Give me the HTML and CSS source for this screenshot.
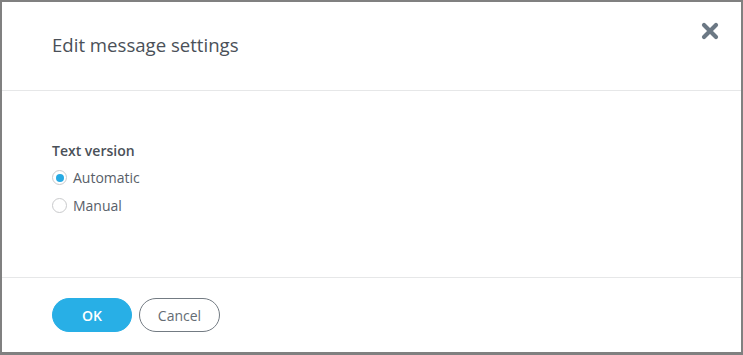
FILE: index.html
```html
<!DOCTYPE html>
<html lang="en">
<head>
<meta charset="utf-8">
<title>Edit message settings</title>
<link rel="stylesheet" href="styles.css">
</head>
<body>
<div class="frame">
  <div class="dialog">
    <div class="header">
      <h1 class="title">Edit message settings</h1>
      <button class="close" aria-label="Close">
        <svg width="18" height="18" viewBox="0 0 18 18"><path d="M3 3 L15 15 M15 3 L3 15" stroke="#6b7884" stroke-width="4.2" stroke-linecap="round"/></svg>
      </button>
    </div>
    <div class="body">
      <div class="group-label">Text version</div>
      <label class="radio-row"><span class="radio checked"></span><span class="radio-text">Automatic</span></label>
      <label class="radio-row"><span class="radio"></span><span class="radio-text">Manual</span></label>
    </div>
    <div class="footer">
      <button class="btn btn-primary">OK</button>
      <button class="btn btn-secondary">Cancel</button>
    </div>
  </div>
</div>
</body>
</html>
```
FILE: styles.css
```css
html, body {
  margin: 0;
  padding: 0;
}
body {
  width: 743px;
  height: 355px;
  background: #808080;
  font-family: "Open Sans", "Noto Sans", sans-serif;
  overflow: hidden;
}
.frame {
  padding: 2px 2px 3px 2px;
  height: 355px;
  box-sizing: border-box;
}
.dialog {
  background: #fff;
  height: 350px;
  display: flex;
  flex-direction: column;
}
.header {
  height: 89px;
  box-sizing: border-box;
  border-bottom: 1px solid #e6e7e8;
  display: flex;
  justify-content: space-between;
  align-items: flex-start;
  padding: 0 22px 0 50px;
}
.title {
  margin: 31px 0 0 0;
  font-size: 18.6px;
  line-height: 24px;
  font-weight: 400;
  color: #4a5058;
}
.close {
  margin-top: 20px;
  padding: 0;
  border: 0;
  background: none;
  width: 18px;
  height: 18px;
  display: flex;
}
.body {
  height: 188px;
  box-sizing: border-box;
  border-bottom: 1px solid #e6e7e8;
  padding: 50px 50px 0 50px;
}
.group-label {
  font-size: 14px;
  line-height: 20px;
  font-weight: 600;
  color: #4a5058;
  margin-bottom: 3px;
}
.radio-row {
  display: flex;
  align-items: center;
  height: 28px;
  gap: 6px;
}
.radio {
  width: 15px;
  height: 15px;
  box-sizing: border-box;
  border: 1.5px solid #c9cacc;
  border-radius: 50%;
  display: flex;
  align-items: center;
  justify-content: center;
  background: #fff;
}
.radio.checked::after {
  content: "";
  width: 8px;
  height: 8px;
  border-radius: 50%;
  background: #27aae3;
}
.radio-text {
  font-size: 14px;
  line-height: 20px;
  color: #586069;
}
.footer {
  display: flex;
  gap: 7px;
  padding: 20px 50px;
}
.btn {
  width: 80px;
  height: 34px;
  border-radius: 17px;
  font-family: "Open Sans", "Noto Sans", sans-serif;
  font-size: 14px;
  padding: 0;
  box-sizing: border-box;
}
.btn-primary {
  background: #28afe6;
  border: 1px solid #28afe6;
  color: #fff;
  font-weight: 600;
}
.btn-secondary {
  width: 81px;
  background: #fff;
  border: 1px solid #737b83;
  color: #646c74;
}
```
